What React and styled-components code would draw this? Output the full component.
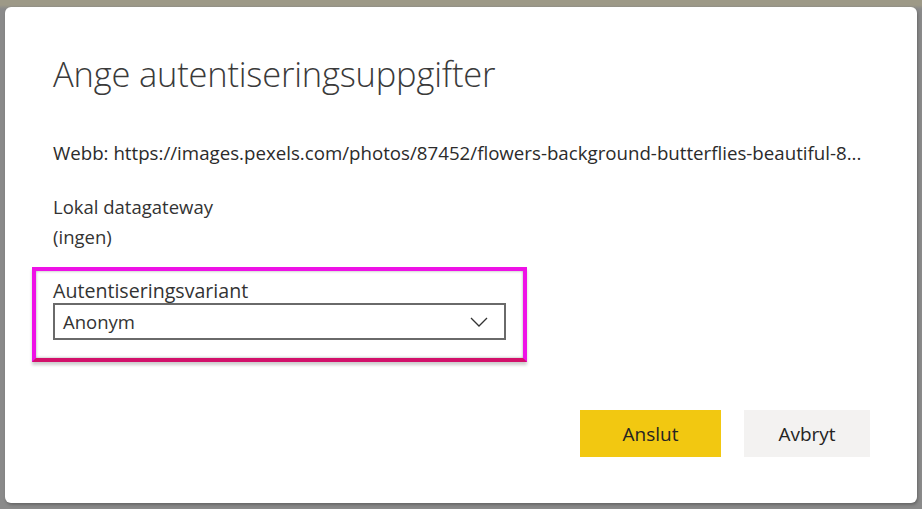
import React from "react";
import styled, { createGlobalStyle } from "styled-components";

const Global = createGlobalStyle`
  html, body {
    margin: 0;
    padding: 0;
    height: 100%;
  }
  body {
    background: linear-gradient(#9d9987 0, #9d9987 5px, #8a8a8a 9px);
    font-family: "Open Sans", "Noto Sans", sans-serif;
    color: #252423;
  }
`;

const Page = styled.div`
  width: 922px;
  height: 509px;
  padding: 7px 5px 6px 5px;
  box-sizing: border-box;
`;

const Dialog = styled.div`
  background: #fff;
  height: 100%;
  border-radius: 6px;
  box-shadow: 1px 2px 3px rgba(0, 0, 0, 0.25);
  padding: 46px 48px 0 48px;
  box-sizing: border-box;
  display: flex;
  flex-direction: column;
`;

const Title = styled.h1`
  margin: 0;
  font-weight: 300;
  font-size: 34.5px;
  line-height: 42px;
  color: #3a3a3a;
  letter-spacing: -0.2px;
`;

const Source = styled.div`
  margin-top: 46px;
  font-size: 18.7px;
  line-height: 24px;
  white-space: nowrap;
  color: #2b2b2b;
`;

const Info = styled.div`
  margin-top: 27px;
  font-size: 18.5px;
  line-height: 30px;
  color: #333;
`;

const Highlight = styled.div`
  margin-top: 15px;
  margin-left: -21px;
  width: 495px;
  border: 4px solid #ee11e6;
  border-bottom-color: #d2106a;
  box-shadow: inset 0 0 3px rgba(0, 0, 0, 0.35), 0 3px 3px rgba(0, 0, 0, 0.2);
  padding: 7px 17px 18px 17px;
  box-sizing: border-box;
`;

const Label = styled.div`
  font-size: 19.6px;
  line-height: 25px;
  color: #333;
`;

const Select = styled.div`
  height: 37px;
  border: 2px solid #6a6a6a;
  box-sizing: border-box;
  display: flex;
  align-items: center;
  justify-content: space-between;
  padding: 0 16px 0 8px;
  font-size: 18.5px;
  color: #333;
`;

const Actions = styled.div`
  margin-top: auto;
  margin-bottom: 46px;
  display: flex;
  justify-content: flex-end;
  gap: 23px;
  margin-right: -1px;
`;

const Button = styled.button`
  height: 47px;
  width: ${(p) => p.$w}px;
  border: none;
  background: ${(p) => (p.$primary ? "#f2c811" : "#f3f2f1")};
  font-family: inherit;
  font-size: 19px;
  color: #252423;
  padding: 0;
`;

export default function App() {
  return (
    <Page>
      <Global />
      <Dialog>
        <Title>Ange autentiseringsuppgifter</Title>
        <Source>
          Webb: https://images.pexels.com/photos/87452/flowers-background-butterflies-beautiful-8...
        </Source>
        <Info>
          Lokal datagateway
          <br />
          (ingen)
        </Info>
        <Highlight>
          <Label>Autentiseringsvariant</Label>
          <Select>
            Anonym
            <svg width="18" height="10" viewBox="0 0 18 10">
              <path d="M1 1l8 8 8-8" fill="none" stroke="#333" strokeWidth="1.3" />
            </svg>
          </Select>
        </Highlight>
        <Actions>
          <Button $primary $w={141}>Anslut</Button>
          <Button $w={126}>Avbryt</Button>
        </Actions>
      </Dialog>
    </Page>
  );
}
